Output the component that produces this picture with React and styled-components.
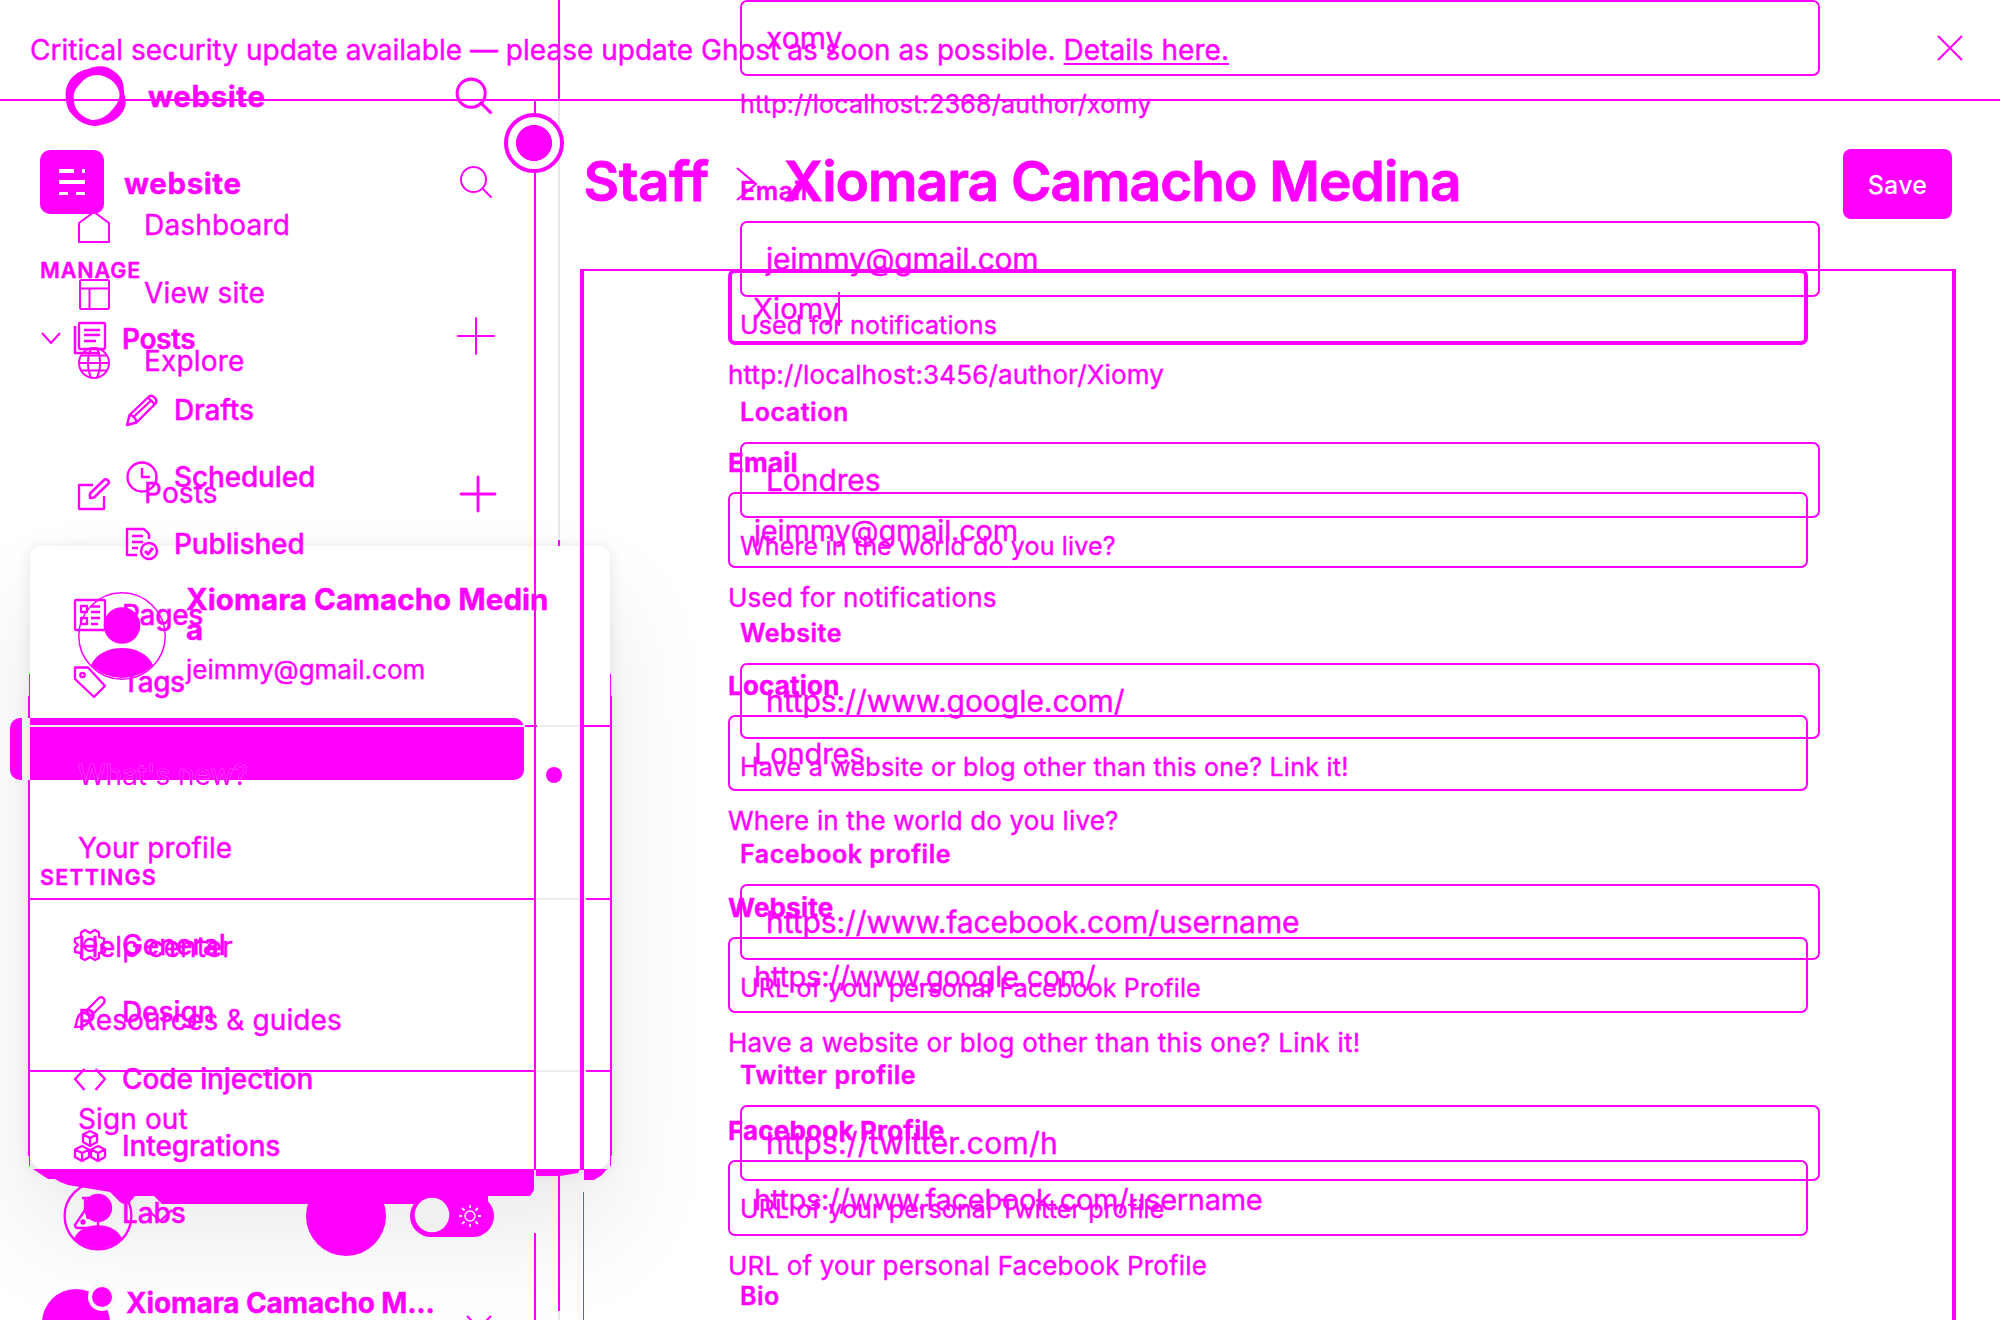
import React from "react";
import styled, { createGlobalStyle } from "styled-components";

const INK = "#ff00ff";
const MUTE = "#e8e8e8";

const GlobalStyle = createGlobalStyle`
  *, *::before, *::after { box-sizing: border-box; }
  html, body { margin: 0; padding: 0; background: #fff; overflow: hidden; }
  body {
    font-family: Inter, "Liberation Sans", sans-serif;
    color: ${INK};
    -webkit-text-stroke: 0.4px ${INK};
  }
`;

/* ---------- stage ---------- */
const Stage = styled.div`
  position: relative;
  display: grid;
  width: 2000px;
  height: 1320px;
  overflow: hidden;
  background: #fff;
`;
const Layer = styled.div`
  grid-area: 1 / 1;
  position: relative;
  display: flex;
  flex-direction: ${(p) => (p.$column ? "column" : "row")};
  width: 2000px;
  height: 1320px;
  overflow: hidden;
`;
const Body = styled.div`
  display: flex;
  flex: 1;
  min-height: 0;
`;
const Icon = styled.svg`
  display: block;
  flex: none;
  overflow: visible;
  fill: none;
  stroke: ${INK};
  stroke-width: ${(p) => p.$w || 2};
  stroke-linejoin: round;
  margin: ${(p) => p.$m || 0};
`;

/* ---------- banner ---------- */
const Banner = styled.header`
  display: flex;
  flex: none;
  align-items: center;
  justify-content: space-between;
  height: 101px;
  padding: 0 38px 3px 30px;
  border-bottom: 2px solid ${INK};
`;
const BannerText = styled.p`
  margin: 0;
  padding-top: 3px;
  font-size: 28px;
  font-weight: 400;
  line-height: 40px;
  letter-spacing: 0.02px;
  white-space: nowrap;
`;
const BannerLink = styled.a`
  color: inherit;
  text-decoration: underline;
  text-decoration-thickness: 2px;
  text-underline-offset: 3px;
`;

/* ---------- sidebars ---------- */
const Sidebar = styled.nav`
  display: flex;
  flex: none;
  flex-direction: column;
  width: ${(p) => p.$width}px;
  background: ${(p) => p.$rule} right top / 2px 100% no-repeat;
`;
const SiteRow = styled.div`
  display: flex;
  flex: none;
  align-items: center;
  height: 64px;
  margin-top: ${(p) => p.$top}px;
  padding-left: ${(p) => p.$left}px;
`;
const SiteName = styled.span`
  width: ${(p) => p.$width}px;
  margin-left: ${(p) => p.$gap}px;
  padding-top: ${(p) => p.$drop || 0}px;
  font-size: 29.5px;
  font-weight: 700;
  line-height: 40px;
  letter-spacing: 0.6px;
`;
const Section = styled.h2`
  flex: none;
  height: 40px;
  margin: ${(p) => p.$top}px 0 0;
  padding-left: 40px;
  font-size: 21.5px;
  font-weight: 600;
  line-height: 40px;
  letter-spacing: ${(p) => p.$ls}px;
`;
const Item = styled.div`
  display: flex;
  flex: none;
  align-items: center;
  height: ${(p) => p.$h || 67}px;
  margin-top: ${(p) => p.$top || 0}px;
  padding-left: ${(p) => p.$left}px;
`;
const ItemText = styled.span`
  width: ${(p) => p.$width || 300}px;
  margin-left: ${(p) => p.$gap}px;
  font-size: 28px;
  font-weight: ${(p) => p.$weight || 500};
  line-height: 40px;
  letter-spacing: ${(p) => p.$ls || 0}px;
`;
const ActiveItem = styled.div`
  flex: none;
  width: 514px;
  height: 62px;
  margin: 3px 0 2px 10px;
  border-radius: 10px;
  background: linear-gradient(90deg, ${INK} 0 12px, #f6f6f6 12px, #ececec 20px, ${INK} 20px);
`;
const UserRow = styled.div`
  display: flex;
  flex: none;
  height: 40px;
  margin-top: 42.5px;
  padding-left: 42px;
`;
const UserName = styled.span`
  width: 341px;
  margin-left: 16px;
  font-size: 28px;
  font-weight: 700;
  line-height: 29px;
  letter-spacing: -0.15px;
`;
const Collapse = styled.button`
  position: absolute;
  left: 504px;
  top: 113px;
  width: 60px;
  height: 60px;
  border: 4px solid ${INK};
  border-radius: 50%;
  background: radial-gradient(circle, ${INK} 0 17.7px, #fff 18.3px);
`;
const BottomRow = styled.div`
  display: flex;
  align-items: center;
  height: 80px;
  margin-top: 649px;
  padding-left: 64px;
`;
const Disc = styled.span`
  width: 80px;
  height: 80px;
  margin: 0 24px 0 134px;
  border-radius: 50%;
  background: ${INK};
`;

/* ---------- account menu ---------- */
const Menu = styled.section`
  position: absolute;
  left: 30px;
  top: 546px;
  width: 580px;
  height: 624px;
  border-radius: 10px 10px 16px 16px;
  background: #fff;
  box-shadow: 0 0 14px rgba(0, 0, 0, 0.07), 0 8px 26px rgba(0, 0, 0, 0.03), 0 60px 110px rgba(0, 0, 0, 0.09);
`;
const MenuEdges = styled.div`
  position: absolute;
  inset: 150px -2px 14px;
  border: solid ${INK};
  border-width: 0 2px;
  &::before,
  &::after {
    content: "";
    position: absolute;
    left: -1px;
    right: -1px;
    border: solid ${INK};
    border-width: 0 1px;
  }
  &::before {
    top: -22px;
    height: 22px;
  }
  &::after {
    bottom: -10px;
    height: 10px;
  }
`;
const MenuHead = styled.div`
  display: flex;
  height: 181px;
  padding: 46px 40px 0 48px;
  border-bottom: 2px solid ${INK};
  border-image: linear-gradient(90deg, #ececec 0 494px, ${INK} 494px 506px, #ececec 506px 550px, ${INK} 550px) 2;
`;
const MenuWho = styled.div`
  display: flex;
  flex-direction: column;
  margin-left: 20px;
`;
const MenuName = styled.strong`
  width: 368px;
  margin-top: -8px;
  font-size: 29.5px;
  font-weight: 700;
  line-height: 30px;
  letter-spacing: 0.05px;
  word-break: break-all;
`;
const MenuMail = styled.span`
  margin-top: 11px;
  font-size: 26px;
  line-height: 30px;
`;
const MenuGroup = styled.div`
  display: flex;
  flex-direction: column;
  height: ${(p) => p.$h}px;
  padding-top: ${(p) => p.$pad || 10}px;
  ${(p) =>
    p.$ruled &&
    `border-bottom: 2px solid ${INK};
     border-image: linear-gradient(90deg, ${INK} 0 504px, #ececec 504px 554px, ${INK} 554px) 2;`}
`;
const MenuItem = styled.div`
  display: flex;
  flex: none;
  align-items: center;
  justify-content: space-between;
  height: 73.5px;
  padding: 0 48px;
  font-size: 28px;
  line-height: 40px;
  letter-spacing: 0.12px;
`;
const Dot = styled.i`
  width: 16px;
  height: 16px;
  border-radius: 50%;
  background: ${INK};
`;
const MenuFoot = styled.svg`
  position: absolute;
  left: 30px;
  top: 1169px;
  overflow: visible;
`;
const WhatsNew = styled.span`
  position: absolute;
  left: 78px;
  top: 754.5px;
  font-size: 28px;
  line-height: 40px;
  -webkit-text-stroke: 0.7px rgba(255, 255, 255, 0.5);
  paint-order: stroke fill;
`;
const HeadRule = styled.i`
  position: absolute;
  left: 30px;
  top: 725px;
  width: 494px;
  height: 2px;
  background: #ececec;
`;

/* ---------- main area ---------- */
const Main = styled.main`
  display: flex;
  flex: 1;
  flex-direction: column;
`;
const TitleBar = styled.div`
  display: flex;
  flex: none;
  align-items: center;
  height: 70px;
  margin: 48px 48px 50px 47.5px;
`;
const Title = styled.h1`
  margin: -6px 0 0 ${(p) => p.$gap || 0}px;
  font-size: 55px;
  font-weight: 600;
  line-height: 70px;
  letter-spacing: ${(p) => p.$ls || 0}px;
  white-space: nowrap;
  -webkit-text-stroke: 0.8px ${INK};
`;
const Save = styled.button`
  width: 109px;
  height: 70px;
  margin-left: auto;
  padding: 1px 0 0;
  border: 0;
  border-radius: 8px;
  background: ${INK};
  color: #fff;
  font: 500 25px/70px Inter, sans-serif;
  letter-spacing: 0.3px;
  -webkit-text-stroke: 0;
`;
const Panel = styled.div`
  display: flex;
  flex: 1;
  flex-direction: column;
  margin: 0 44px 0 44px;
  padding: 0 148px;
  background:
    linear-gradient(${INK}, ${INK}) left top / 100% 2px no-repeat,
    linear-gradient(${INK}, ${INK}) left top / 4px 901px no-repeat,
    linear-gradient(${INK}, ${INK}) 3px 923px / 1px 200px no-repeat,
    linear-gradient(${INK}, ${INK}) right top / 4px 100% no-repeat;
`;
const Form = styled.div`
  display: flex;
  flex-direction: column;
  margin-left: 180px;
  width: 1080px;
`;
const Label = styled.label`
  flex: none;
  height: 60px;
  margin-top: ${(p) => (p.$wide ? 27.75 : 29)}px;
  padding-top: ${(p) => (p.$wide ? 1 : 0)}px;
  font-size: ${(p) => (p.$wide ? 26 : 25)}px;
  font-weight: ${(p) => (p.$wide ? 700 : 600)};
  line-height: 60px;
  letter-spacing: ${(p) => (p.$wide ? 0.2 : 0.54)}px;
`;
const Input = styled.div`
  display: flex;
  flex: none;
  align-items: center;
  height: 76px;
  padding: ${(p) => (p.$wide ? 3 : 0)}px 0 0 ${(p) => (p.$focus ? 21 : 24)}px;
  border: ${(p) => (p.$focus ? 4 : 2)}px solid ${INK};
  border-radius: 7px;
  font-size: ${(p) => (p.$wide ? 29 : 30)}px;
  line-height: 40px;
  letter-spacing: ${(p) => p.$ls || 0}px;
`;
const Caret = styled.i`
  width: 1.5px;
  height: 34px;
  margin-left: -1px;
  background: ${INK};
`;
const Hint = styled.p`
  flex: none;
  height: ${(p) => (p.$wide ? 59 : 56)}px;
  margin: 0;
  font-size: ${(p) => (p.$wide ? 26 : 25)}px;
  line-height: ${(p) => (p.$wide ? 59 : 56)}px;
  letter-spacing: ${(p) => p.$ls || 0.15}px;
  white-space: nowrap;
`;

/* ---------- icons ---------- */
const Search = ({ size, w }) => (
  <Icon width={size} height={size} viewBox="0 0 32 32" $w={w}>
    <circle cx="13.5" cy="13.5" r="12.5" />
    <path d="M22.5 22.5 31.5 31.5" />
  </Icon>
);
const Plus = ({ size, w, m }) => (
  <Icon width={size} height={size} viewBox="0 0 36 36" $w={w} $m={m} strokeLinecap="round">
    <path d="M18 0V36M0 18H36" />
  </Icon>
);
const Person = ({ size, w }) => (
  <Icon width={size} height={size} viewBox="0 0 88 88" $w={w}>
    <circle cx="44" cy="44" r="43.2" />
    <circle cx="44" cy="33.500" r="18.300" fill={INK} stroke="none" />
    <path d="M13 73C18 62 30 56 44 56S70 62 75 73A43.500 43.500 0 0 1 13 73Z" fill={INK} stroke="none" />
  </Icon>
);
const glyphs = {
  posts: (
    <>
      <rect x="5" y="1" width="26" height="26" rx="1" />
      <path d="M1 4V31H26M10 8H26M10 13H26M10 19H22" strokeWidth="2.600" />
    </>
  ),
  pencil: (
    <>
      <path d="M1 31 3.500 21 23 2.500C26 0 32 5 30 9L10.500 28.500Z" />
      <path d="M3.500 21C7 21 10.500 25 10.500 28.500M8 22.500 25 6.500M22 3.500 28.500 10" />
    </>
  ),
  clock: (
    <>
      <circle cx="16" cy="16" r="14.500" />
      <path d="M16 7V16H24" />
    </>
  ),
  published: (
    <>
      <path d="M11 27H1V1H18L23 6V11M6 8H17M6 14H17M6 20H12" />
      <circle cx="23" cy="23" r="8" />
      <path d="M19 23 22 26 27 20" strokeWidth="3" />
    </>
  ),
  pages: (
    <>
      <rect x="1" y="1" width="30" height="30" rx="1" />
      <path d="M7 7H13V13H7ZM7 19H13V25H7ZM17 7.500H26M17 13H26M17 19H26M17 25H24" />
    </>
  ),
  tag: (
    <>
      <path d="M1 1.500H14L31 20 20 31 1 13Z" />
      <circle cx="8.500" cy="9" r="2.200" />
    </>
  ),
  gear: (
    <>
      <path d="M11 1 16 4 21 1 25 3.500V8L30 9.500V14L27 16 31 19V23L25 24V29L21 31 16 28 11 31 7 29V24L1 23V19L4 16 1 13V9.500L7 8V3.500Z" />
      <circle cx="16" cy="16" r="6" />
    </>
  ),
  brush: (
    <>
      <path d="M12 15 25 2C28 0 32 3 30 7L17 20Z" />
      <path d="M1 31C4 27 1 20 8 17 13 16 17 21 15 25 12 31 6 31 1 31Z" />
    </>
  ),
  code: <path d="M10.500 6 1 16 10.500 27M21.500 6 31 16 21.500 27" />,
  cubes: (
    <>
      <path d="M16 1 23 4.500V12L16 16 9 12V4.500ZM9 4.500 16 8 23 4.500M16 8V16" />
      <path d="M8 16 15 19.500V27L8 31 1 27V19.500ZM1 19.500 8 23 15 19.500M8 23V31" />
      <path d="M24 16 31 19.500V27L24 31 17 27V19.500ZM17 19.500 24 23 31 19.500M24 23V31" />
    </>
  ),
  flask: (
    <>
      <path d="M8 1H24M11 1V13L1 28C1 30 2 31 4 31H24V24" />
      <circle cx="9" cy="25" r="1.500" fill={INK} />
      <circle cx="14" cy="20" r="1" fill={INK} />
    </>
  ),
  home: <path d="M1 12 16 1 31 12V31H1Z" strokeLinejoin="miter" />,
  layout: (
    <>
      <rect x="2" y="1" width="29" height="29" rx="1.500" />
      <path d="M2 9.500H31M11.500 9.500V30" />
    </>
  ),
  globe: (
    <>
      <circle cx="16" cy="16" r="15" />
      <path d="M1.500 16H31M3.500 8.500H28.500M3.500 23.500H28.500M13 1.500C9 10 9 22 13 30.500M19 1.500C23 10 23 22 19 30.500" />
    </>
  ),
  compose: (
    <>
      <path d="M15 7H1V31H26V18" />
      <path d="M12 20V15.500L26 2C28 0 32 3 30.500 5.500L16 19.500Z" strokeWidth="2.500" />
    </>
  ),
};
const Glyph = ({ name, w, m }) => (
  <Icon width="32" height="32" viewBox="0 0 32 32" $w={w || 2.3} $m={m}>
    {glyphs[name]}
  </Icon>
);

/* ---------- data ---------- */
const subPosts = [["pencil", "Drafts"], ["clock", "Scheduled"], ["published", "Published"]];
const settings = [
  ["gear", "General"],
  ["brush", "Design"],
  ["code", "Code injection"],
  ["cubes", "Integrations"],
  ["flask", "Labs"],
];
const siteLinks = [["home", "Dashboard"], ["layout", "View site"], ["globe", "Explore"]];
const editForm = [
  { value: "Xiomy", hint: "http://localhost:3456/author/Xiomy", ls: 0.2, focus: true },
  { label: "Email", value: "jeimmy@gmail.com", hint: "Used for notifications", ls: -0.18, hintLs: 0.22 },
  { label: "Location", value: "Londres", hint: "Where in the world do you live?", ls: -0.1 },
  {
    label: "Website",
    value: "https://www.google.com/",
    hint: "Have a website or blog other than this one? Link it!",
    ls: -0.27,
    hintLs: 0.25,
  },
  {
    label: "Facebook Profile",
    value: "https://www.facebook.com/username",
    hint: "URL of your personal Facebook Profile",
    ls: -0.3,
  },
];
const profileForm = [
  { value: "xomy", hint: "http://localhost:2368/author/xomy", hintLs: 0.24 },
  { label: "Email", value: "jeimmy@gmail.com", hint: "Used for notifications", ls: -0.23 },
  { label: "Location", value: "Londres", hint: "Where in the world do you live?", ls: -0.1 },
  {
    label: "Website",
    value: "https://www.google.com/",
    hint: "Have a website or blog other than this one? Link it!",
    ls: -0.05,
    hintLs: 0.25,
  },
  {
    label: "Facebook profile",
    value: "https://www.facebook.com/username",
    hint: "URL of your personal Facebook Profile",
    ls: -0.08,
  },
  { label: "Twitter profile", value: "https://twitter.com/h", hint: "URL of your personal Twitter profile", ls: 0.22 },
];

const Fields = ({ rows, wide }) =>
  rows.map(({ label, value, hint, ls, hintLs, focus }) => (
    <React.Fragment key={value}>
      {label && <Label $wide={wide}>{label}</Label>}
      <Input $wide={wide} $focus={focus} $ls={ls}>
        {value}
        {focus && <Caret />}
      </Input>
      <Hint $wide={wide} $ls={hintLs}>{hint}</Hint>
    </React.Fragment>
  ));

const ruleA = `linear-gradient(${INK} 0 1069px, transparent 1069px 1132px, ${INK} 1132px)`;
const ruleB = `linear-gradient(${INK} 0 99px, ${MUTE} 99px 540px, ${INK} 540px 546px, transparent 546px 1176px, ${INK} 1176px 1311px, ${MUTE} 1311px)`;

const AccountMenu = () => (
  <Menu>
    <MenuEdges />
    <MenuHead>
      <Person size={88} w={1.5} />
      <MenuWho>
        <MenuName>Xiomara Camacho Medina</MenuName>
        <MenuMail>jeimmy@gmail.com</MenuMail>
      </MenuWho>
    </MenuHead>
    <MenuGroup $h={173} $pad={11} $ruled>
      <MenuItem>
        <span />
        <Dot />
      </MenuItem>
      <MenuItem>Your profile</MenuItem>
    </MenuGroup>
    <MenuGroup $h={172} $ruled>
      <MenuItem>Help center</MenuItem>
      <MenuItem>Resources &amp; guides</MenuItem>
    </MenuGroup>
    <MenuGroup $h={98}>
      <MenuItem>Sign out</MenuItem>
    </MenuGroup>
  </Menu>
);

export default function App() {
  return (
    <>
      <GlobalStyle />
      <Stage>
        <Layer>
          <AccountMenu />
          <MenuFoot width="582" height="36" fill={INK}>
            <path d="M3 0H504V21L500 27H458V35H132L124 27H105L100 33Q94 38 88 31L80 23L50 18L38 16L30 13L25 10H18Z" />
            <path d="M506 0H550L548 4L530 7H506Z" />
            <path d="M554 0H577L572 6L564 11H554Z" />
          </MenuFoot>
        </Layer>

        <Layer>
          <Sidebar $width={560} $rule={ruleB}>
            <SiteRow $top={64} $left={65}>
              <Icon width="61" height="60" viewBox="0 0 61 60" $w="0">
                <path
                  fill={INK}
                  fillRule="evenodd"
                  d="M23 3C32-1 42-1 50 6 57 11 59 17 59 27 62 35 61 41 57 47 51 56 41 58 31 60 21 60 12 55 5 46 1 41 0 30 1 23 4 12 12 5 23 3ZM33 9C25 9 20 12 15 18 9 24 8 29 9 35 9 44 18 52 27 54 36 54 43 49 47 44 52 38 56 33 54 25 51 16 43 10 33 9Z"
                />
              </Icon>
              <SiteName $gap={22} $width={308}>website</SiteName>
              <Search size={36} w={2.7} />
            </SiteRow>
            {siteLinks.map(([icon, text], i) => (
              <Item key={text} $h={68} $top={i ? 0 : 63} $left={78}>
                <Glyph name={icon} w={2} m="3px 0 0" />
                <ItemText $weight={400} $gap={34} $ls={0.17}>{text}</ItemText>
              </Item>
            ))}
            <Item $h={68} $top={64} $left={78}>
              <Glyph name="compose" m="2px 0 0" />
              <ItemText $weight={400} $gap={34} $width={317} $ls={0.17}>Posts</ItemText>
              <Plus size={34} w={3} m="2px 0 0" />
            </Item>
            <BottomRow>
              <Person size={68} w={3} />
              <Icon width="24" height="12" $m="0 0 0 16px">
                <path d="M0 0 12 11 24 0" />
              </Icon>
              <Disc />
              <Icon width="84" height="42" viewBox="0 0 84 42" $w="0">
                <rect width="84" height="42" rx="21" fill={INK} />
                <circle cx="22" cy="20" r="17.300" fill="#f0f0f0" />
                <circle cx="60" cy="21" r="5" fill="none" stroke="#f0f0f0" strokeWidth="1.500" />
                <path
                  d="M60 10V13M60 29V32M49 21H52M68 21H71M52 13 54.500 15.500M65.500 26.500 68 29M68 13 65.500 15.500M54.500 26.500 52 29"
                  stroke="#f0f0f0"
                  strokeWidth="1.800"
                />
              </Icon>
            </BottomRow>
          </Sidebar>
          <Main>
            <Form>
              <Fields rows={profileForm} />
              <Label>Bio</Label>
            </Form>
          </Main>
        </Layer>

        <Layer $column>
          <Banner>
            <BannerText>
              Critical security update available — please update Ghost as soon as possible.{" "}
              <BannerLink>Details here.</BannerLink>
            </BannerText>
            <Icon width="24" height="24" $w="2">
              <path d="M0 0 24 24M24 0 0 24" />
            </Icon>
          </Banner>
          <Body>
            <Sidebar $width={536} $rule={ruleA}>
              <SiteRow $top={49} $left={40}>
                <Icon width="64" height="64" $w="0">
                  <rect width="64" height="64" rx="10" fill={INK} />
                  <path d="M19 19H34V23H19ZM42 19H45V23H42ZM19 30H45V34H19ZM19 42H28V45H19ZM36 42H45V45H36Z" fill="#fff" />
                </Icon>
                <SiteName $gap={20} $width={336} $drop={2}>website</SiteName>
                <Search size={32} w={2} />
              </SiteRow>
              <Section $top={36} $ls={0.9}>MANAGE</Section>
              <Item $top={15} $left={42}>
                <Icon width="18" height="11">
                  <path d="M0 0 9 10 18 0" />
                </Icon>
                <Item $left={14}>
                  <Glyph name="posts" m="-1px 0 0" />
                </Item>
                <ItemText $gap={16} $width={336} $weight={600} $ls={-0.4}>Posts</ItemText>
                <Plus size={36} w={2} m="-5px 0 0" />
              </Item>
              {subPosts.map(([icon, text], i) => (
                <Item key={text} $top={i ? 0 : 4} $left={126}>
                  <Glyph name={icon} w={2.4} />
                  <ItemText $gap={16} $ls={-0.15}>{text}</ItemText>
                </Item>
              ))}
              <Item $top={4} $left={74}>
                <Glyph name="pages" />
                <ItemText $gap={16} $ls={-0.3}>Pages</ItemText>
              </Item>
              <Item $left={74}>
                <Glyph name="tag" />
                <ItemText $gap={16} $ls={-0.5}>Tags</ItemText>
              </Item>
              <ActiveItem />
              <Section $top={75} $ls={1.15}>SETTINGS</Section>
              {settings.map(([icon, text], i) => (
                <Item key={text} $top={i ? 0 : 14.5} $left={74}>
                  <Glyph name={icon} />
                  <ItemText $gap={16} $ls={-0.1}>{text}</ItemText>
                </Item>
              ))}
              <UserRow>
                <Icon width="68" height="68" $w="0">
                  <circle cx="34" cy="34" r="34" fill={INK} />
                  <circle cx="60" cy="8" r="14" fill="#f8f8f8" />
                  <circle cx="60" cy="8" r="10" fill={INK} />
                </Icon>
                <UserName>Xiomara Camacho M...</UserName>
                <Icon width="24" height="12" $m="27px 0 0">
                  <path d="M0 0 12 12 24 0" />
                </Icon>
              </UserRow>
            </Sidebar>
            <Main>
              <TitleBar>
                <Title $ls={-0.5}>Staff</Title>
                <Icon width="20" height="32" $m="0 0 0 28px" $w="2.2">
                  <path d="M0 0 19 16 0 32" />
                </Icon>
                <Title $gap={27} $ls={-0.99}>Xiomara Camacho Medina</Title>
                <Save>Save</Save>
              </TitleBar>
              <Panel>
                <Fields rows={editForm} wide />
              </Panel>
            </Main>
          </Body>
          <Collapse />
          <HeadRule />
          <WhatsNew>What's new?</WhatsNew>
        </Layer>
      </Stage>
    </>
  );
}
